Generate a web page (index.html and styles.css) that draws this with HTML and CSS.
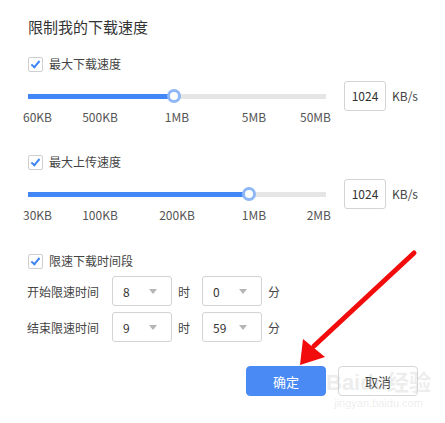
FILE: index.html
```html
<!DOCTYPE html>
<html lang="zh-CN">

<head>
  <meta charset="UTF-8">
  <meta name="viewport" content="width=device-width, initial-scale=1.0">
  <title>限制我的下载速度</title>
  <link rel="stylesheet" href="styles.css">
</head>

<body>
  <div class="dialog">
    <h1>限制我的下载速度</h1>

    <label class="check"><span class="box"></span>最大下载速度</label>
    <div class="speed-row">
      <div class="slider">
        <div class="track-wrap">
          <div class="track">
            <div class="fill" style="width: 49%"><span class="thumb"></span></div>
          </div>
        </div>
        <div class="scale">
          <span class="tick first"><i>60KB</i></span>
          <span class="tick"><i>500KB</i></span>
          <span class="tick"><i>1MB</i></span>
          <span class="tick"><i>5MB</i></span>
          <span class="tick last"><i>50MB</i></span>
        </div>
      </div>
      <div class="value">1024</div>
      <span class="unit">KB/s</span>
    </div>

    <label class="check second"><span class="box"></span>最大上传速度</label>
    <div class="speed-row">
      <div class="slider">
        <div class="track-wrap">
          <div class="track">
            <div class="fill" style="width: 74.3%"><span class="thumb"></span></div>
          </div>
        </div>
        <div class="scale">
          <span class="tick first"><i>30KB</i></span>
          <span class="tick"><i>100KB</i></span>
          <span class="tick"><i>200KB</i></span>
          <span class="tick"><i>1MB</i></span>
          <span class="tick last"><i>2MB</i></span>
        </div>
      </div>
      <div class="value">1024</div>
      <span class="unit">KB/s</span>
    </div>

    <label class="check third"><span class="box"></span>限速下载时间段</label>
    <div class="time-row first-row">
      <span class="time-label">开始限速时间</span>
      <div class="select"><span>8</span><b class="caret"></b></div>
      <span class="suffix">时</span>
      <div class="select"><span>0</span><b class="caret"></b></div>
      <span class="suffix">分</span>
    </div>
    <div class="time-row">
      <span class="time-label">结束限速时间</span>
      <div class="select"><span>9</span><b class="caret"></b></div>
      <span class="suffix">时</span>
      <div class="select"><span>59</span><b class="caret"></b></div>
      <span class="suffix">分</span>
    </div>

    <div class="actions">
      <button class="btn primary">确定</button>
      <button class="btn">取消</button>
    </div>
  </div>

  <svg class="arrow" width="445" height="423" viewBox="0 0 445 423">
    <line x1="414" y1="253" x2="314" y2="346" stroke="#f20c0c" stroke-width="5" stroke-linecap="round" />
    <polygon points="300,365 303,339 325,357" fill="#f20c0c" />
  </svg>

  <div class="watermark">
    <span class="wm-logo">Baidu经验</span>
    <span class="wm-url">jingyan.baidu.com</span>
  </div>
</body>

</html>
```

FILE: styles.css
```css
body {
  margin: 0;
  padding: 0;
  background: #fff;
  font-family: "Noto Sans CJK SC", "Noto Sans", sans-serif;
  color: #444;
  font-size: 12px;
  width: 445px;
  height: 423px;
  overflow: hidden;
  position: relative;
}

.dialog {
  padding: 17px 27px 0 28px;
  display: flex;
  flex-direction: column;
}

h1 {
  margin: 0;
  font-size: 15px;
  font-weight: normal;
  line-height: 20px;
  color: #333;
}

.check {
  display: flex;
  align-items: center;
  height: 16px;
  line-height: 16px;
  margin-top: 19px;
}

.check.second {
  margin-top: 29px;
}

.check.third {
  margin-top: 30px;
}

.box {
  width: 13px;
  height: 13px;
  border: 1px solid #cfcfcf;
  border-radius: 2px;
  margin-right: 6px;
  position: relative;
}

.box::after {
  content: "";
  position: absolute;
  left: 4px;
  top: 1px;
  width: 3px;
  height: 7px;
  border: solid #3f86f4;
  border-width: 0 2px 2px 0;
  transform: rotate(40deg);
}

.speed-row {
  display: flex;
  align-items: flex-start;
  margin-top: 9px;
}

.slider {
  width: 298px;
}

.track-wrap {
  height: 30px;
  display: flex;
  align-items: center;
}

.track {
  width: 100%;
  height: 5px;
  background: #e5e5e5;
}

.fill {
  position: relative;
  height: 100%;
  background: #4287f5;
}

.thumb {
  position: absolute;
  top: 50%;
  right: -7px;
  width: 8px;
  height: 8px;
  margin-top: -7px;
  border: 3px solid #8fb7f8;
  border-radius: 50%;
  background: #fff;
}

.scale {
  display: flex;
  justify-content: space-between;
  height: 16px;
  line-height: 16px;
  margin-top: -2px;
  color: #555;
}

.tick {
  width: 0;
  display: flex;
  justify-content: center;
  white-space: nowrap;
}

.tick i {
  font-style: normal;
}

.tick.first {
  justify-content: flex-start;
  margin-left: -5px;
}

.tick.last {
  justify-content: flex-end;
  margin-right: -5px;
}

.value {
  margin-left: 18px;
  width: 40px;
  height: 28px;
  border: 1px solid #d3d3d3;
  border-radius: 3px;
  line-height: 28px;
  text-align: center;
  color: #333;
}

.unit {
  margin-left: 6px;
  line-height: 30px;
}

.time-row {
  display: flex;
  align-items: center;
  margin-top: 6px;
}

.time-row.first-row {
  margin-top: 7px;
}

.time-label {
  width: 85px;
  margin-left: -1px;
}

.select {
  width: 34px;
  height: 28px;
  border: 1px solid #d3d3d3;
  border-radius: 3px;
  display: flex;
  align-items: center;
  justify-content: space-between;
  padding: 0 14px 0 10px;
  color: #333;
}

.caret {
  width: 0;
  height: 0;
  border-left: 4px solid transparent;
  border-right: 4px solid transparent;
  border-top: 5px solid #b5b5b5;
}

.suffix {
  margin: 0 12px 0 6px;
}

.actions {
  display: flex;
  justify-content: flex-end;
  gap: 12px;
  margin-top: 24px;
}

.btn {
  width: 80px;
  height: 30px;
  border: 1px solid #d6d6d6;
  border-radius: 4px;
  background: #fff;
  font-family: inherit;
  font-size: 13px;
  color: #333;
}

.btn.primary {
  background: #4a8af4;
  border-color: #4a8af4;
  color: #fff;
}

.arrow {
  position: absolute;
  top: 0;
  left: 0;
}

.watermark {
  position: absolute;
  left: 326px;
  top: 370px;
  display: flex;
  flex-direction: column;
  align-items: center;
  color: rgba(205, 205, 205, 0.35);
  pointer-events: none;
}

.wm-logo {
  font-family: "Liberation Sans", "Noto Sans CJK SC", sans-serif;
  font-size: 22px;
  font-weight: bold;
  line-height: 26px;
}

.wm-url {
  font-family: "Liberation Sans", sans-serif;
  font-size: 11px;
  line-height: 14px;
}
```
